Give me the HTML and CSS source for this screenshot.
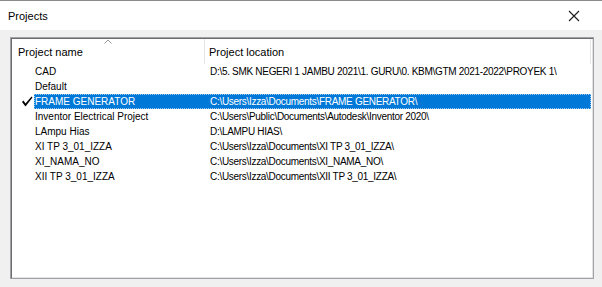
FILE: index.html
```html
<!DOCTYPE html>
<html>
<head>
    <title>Projects</title>
    <link rel="stylesheet" href="styles.css">
</head>
<body>

<div class="window">
    <!-- Title bar -->
    <div class="titlebar">
        <span class="title">Projects</span>
        <svg class="close" width="12" height="12" viewBox="0 0 12 12">
            <path d="M1 1 L11 11 M11 1 L1 11" stroke="#1a1a1a" stroke-width="1.1" fill="none"/>
        </svg>
    </div>

    <!-- Project list -->
    <div class="content">
        <div class="listbox">
            <div class="header">
                <div class="head-name">
                    Project name
                    <svg class="sort" width="8" height="5" viewBox="0 0 8 5">
                        <path d="M0.5 4.5 L4 1 L7.5 4.5" stroke="#9a9a9a" fill="none"/>
                    </svg>
                </div>
                <div class="head-loc">Project location</div>
            </div>

            <div class="rows">
                <div class="row">
                    <div class="check"></div>
                    <div class="cells"><div class="name">CAD</div><div class="loc">D:\5. SMK NEGERI 1 JAMBU 2021\1. GURU\0. KBM\GTM 2021-2022\PROYEK 1\</div></div>
                </div>
                <div class="row">
                    <div class="check"></div>
                    <div class="cells"><div class="name">Default</div><div class="loc"></div></div>
                </div>
                <div class="row">
                    <div class="check">
                        <svg width="12" height="11" viewBox="0 0 12 11">
                            <path d="M1 6 L2.5 4.5 L4.5 7.5 L10.5 0.5 L11.5 1.5 L4.5 10.5 Z" fill="#000"/>
                        </svg>
                    </div>
                    <div class="cells selected"><div class="name">FRAME GENERATOR</div><div class="loc">C:\Users\Izza\Documents\FRAME GENERATOR\</div></div>
                </div>
                <div class="row">
                    <div class="check"></div>
                    <div class="cells"><div class="name">Inventor Electrical Project</div><div class="loc">C:\Users\Public\Documents\Autodesk\Inventor 2020\</div></div>
                </div>
                <div class="row">
                    <div class="check"></div>
                    <div class="cells"><div class="name">LAmpu Hias</div><div class="loc">D:\LAMPU HIAS\</div></div>
                </div>
                <div class="row">
                    <div class="check"></div>
                    <div class="cells"><div class="name">XI TP 3_01_IZZA</div><div class="loc">C:\Users\Izza\Documents\XI TP 3_01_IZZA\</div></div>
                </div>
                <div class="row">
                    <div class="check"></div>
                    <div class="cells"><div class="name">XI_NAMA_NO</div><div class="loc">C:\Users\Izza\Documents\XI_NAMA_NO\</div></div>
                </div>
                <div class="row">
                    <div class="check"></div>
                    <div class="cells"><div class="name">XII TP 3_01_IZZA</div><div class="loc">C:\Users\Izza\Documents\XII TP 3_01_IZZA\</div></div>
                </div>
            </div>
        </div>
    </div>
</div>

</body>
</html>
```
FILE: styles.css
```css
body {
    margin: 0;
    font-family: "Liberation Sans", Arial, sans-serif;
    font-size: 10px;
    color: #000;
    background-color: #f0f0f0;
}

.window {
    width: 602px;
    height: 287px;
    box-sizing: border-box;
    border-top: 1px solid #8a8a8a;
    background-color: #f0f0f0;
}

.titlebar {
    height: 29px;
    background-color: #fff;
    display: flex;
    align-items: center;
    justify-content: space-between;
    padding: 0 22px 0 8px;
}

.title {
    font-size: 11px;
    color: #000;
}

.content {
    padding: 7px 8px 0 10px;
}

.listbox {
    width: 584px;
    height: 242px;
    box-sizing: border-box;
    background-color: #fff;
    border: 1px solid #a0a0a8;
    box-shadow: inset 1px 1px 0 #6d6d6d, inset -1px -1px 0 #e3e3e3;
    padding: 1px 2px 0 1px;
}

.header {
    display: flex;
    height: 25px;
    align-items: center;
    font-size: 11px;
}

.head-name {
    position: relative;
    width: 186px;
    padding-left: 6px;
    height: 100%;
    display: flex;
    align-items: center;
    border-right: 1px solid #e5e5e5;
}

.sort {
    position: absolute;
    left: 92px;
    top: 0;
}

.head-loc {
    flex: 1;
    padding-left: 4px;
    height: 100%;
    display: flex;
    align-items: center;
    border-right: 1px solid #e5e5e5;
}

.row {
    display: flex;
    height: 15px;
}

.check {
    width: 21px;
    display: flex;
    align-items: center;
    justify-content: flex-end;
    padding-right: 1px;
}

.cells {
    flex: 1;
    min-width: 0;
    display: flex;
    box-sizing: border-box;
    border: 1px solid transparent;
    line-height: 13px;
}

.cells.selected {
    background-color: #0078d7;
    color: #fff;
    border: 1px dotted #99c9ef;
}

.name {
    width: 175px;
    flex-shrink: 0;
}

.loc {
    flex: 1;
    min-width: 0;
    white-space: nowrap;
    overflow: hidden;
    letter-spacing: -0.3px;
}
```
